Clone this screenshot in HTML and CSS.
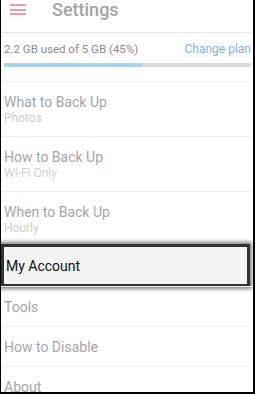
FILE: index.html
```html
<!DOCTYPE html>
<html>
<head>
<meta charset="utf-8">
<link rel="stylesheet" href="styles.css">
</head>
<body>
<div class="frame">
  <header class="topbar">
    <div class="menu-icon"><span></span><span></span><span></span></div>
    <div class="title">Settings</div>
  </header>
  <section class="storage">
    <div class="storage-row">
      <span class="usage">2.2 GB used of 5 GB (45%)</span>
      <span class="change">Change plan</span>
    </div>
    <div class="bar"><div class="fill" style="width:56%"></div></div>
  </section>
  <ul class="list">
    <li class="item"><div class="main">What to Back Up</div><div class="sub">Photos</div></li>
    <li class="item"><div class="main">How to Back Up</div><div class="sub">Wi-Fi Only</div></li>
    <li class="item"><div class="main">When to Back Up</div><div class="sub">Hourly</div></li>
    <li class="item selected-wrap"><div class="selected">My Account</div></li>
    <li class="item single"><div class="main">Tools</div></li>
    <li class="item single"><div class="main">How to Disable</div></li>
    <li class="item single"><div class="main">About</div></li>
  </ul>
</div>
</body>
</html>
```
FILE: styles.css
```css
html, body { margin: 0; padding: 0; background: #fff; }
.frame {
  width: 255px;
  height: 394px;
  box-sizing: border-box;
  border-left: 1px solid #000;
  border-right: 2px solid #000;
  border-bottom: 2px solid #000;
  overflow: hidden;
  font-family: Roboto, "Liberation Sans", sans-serif;
  background: #fff;
}
.topbar {
  height: 32px;
  border-bottom: 1px solid #e6e6e6;
  display: flex;
  align-items: flex-start;
}
.menu-icon {
  margin: 4px 0 0 9px;
  width: 16px;
  display: flex;
  flex-direction: column;
  gap: 2.7px;
}
.menu-icon span {
  display: block;
  height: 2px;
  background: #ec9c9c;
}
.title {
  margin-left: 26px;
  font-size: 18px;
  font-weight: 500;
  line-height: 22px;
  margin-top: -1px;
  color: #a4a4a4;
}
.storage {
  padding: 8px 2px 14px 3px;
}
.storage-row {
  display: flex;
  justify-content: space-between;
  line-height: 16px;
  height: 16px;
}
.usage { font-size: 11.5px; color: #8c8c8c; }
.change { font-size: 12px; color: #82b2e4; }
.bar {
  margin-top: 6px;
  height: 4px;
  background: #dcdcdc;
}
.fill { height: 100%; background: #a6d6ea; }
.list { list-style: none; margin: 0; padding: 0; }
.item {
  border-top: 1px solid #efefef;
  padding: 12px 3px 10px 3px;
}
.item.single { padding: 12px 3px 11px 3px; }
.main { font-size: 14px; line-height: 16px; color: #a6a6a6; }
.sub { font-size: 12px; line-height: 16px; color: #d0d0d0; }
.item.selected-wrap {
  padding: 0 6px 2px 3px;
  border-top-color: transparent;
}
.selected {
  height: 37px;
  line-height: 39px;
  background: #f4f4f4;
  color: #111;
  font-size: 14px;
  padding-left: 2px;
  box-shadow: 0 0 0 3px #333, 0 0 4px 5px rgba(0,0,0,0.5);
}
```
